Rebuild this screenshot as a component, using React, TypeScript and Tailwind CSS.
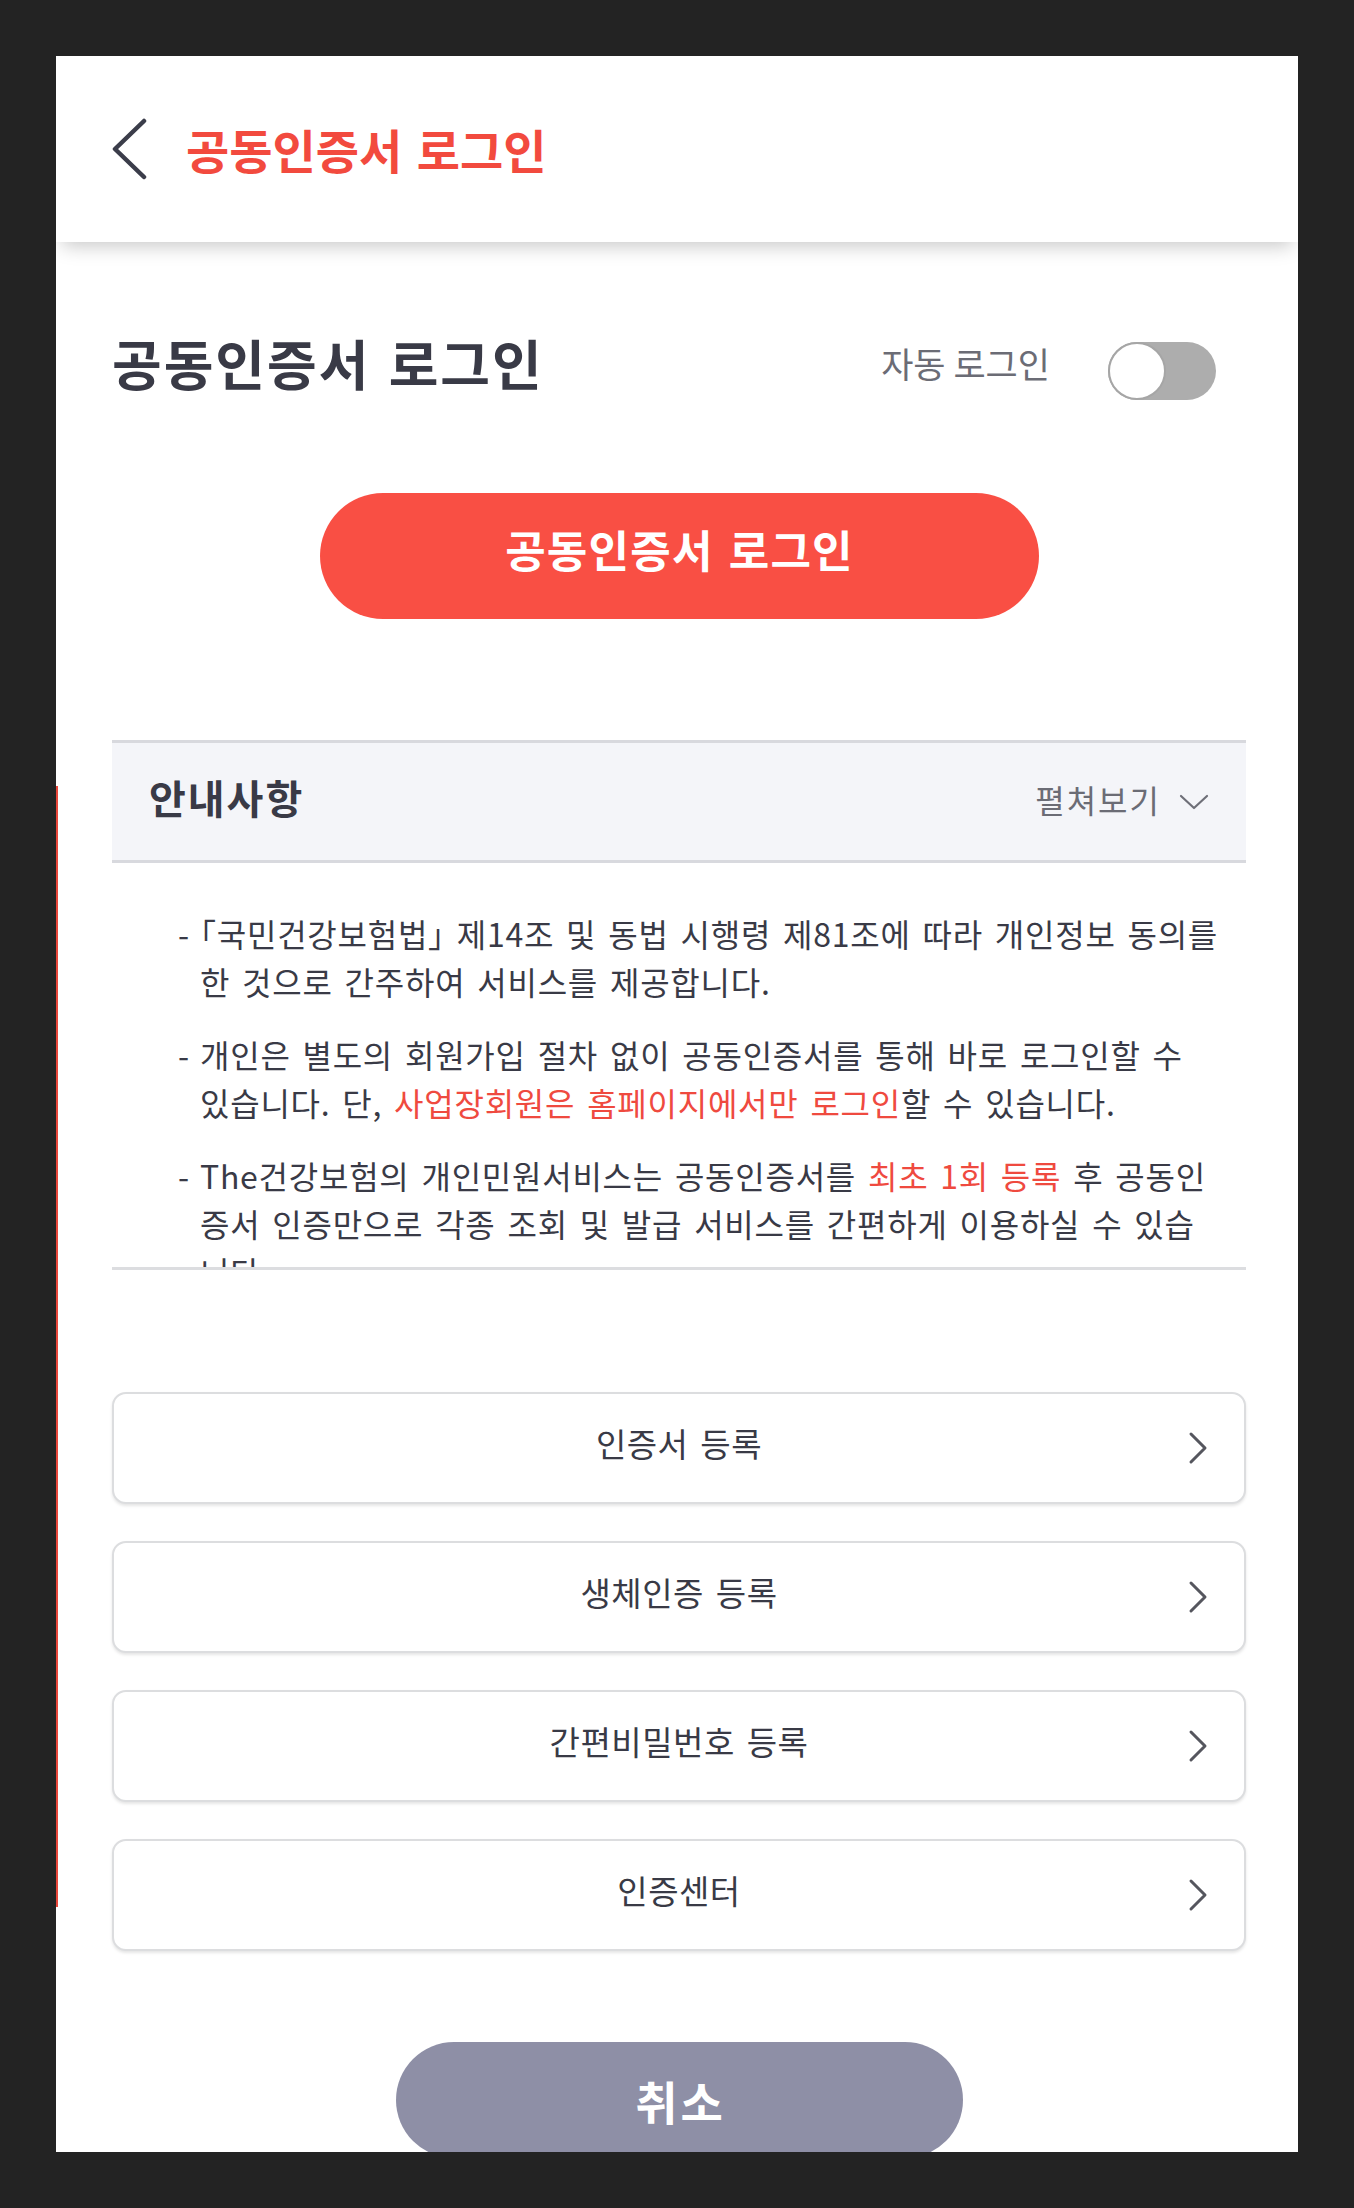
import { ReactNode } from "react";

const FONT = { fontFamily: '"Noto Sans CJK KR", "Noto Sans", sans-serif' };

const menuItems = ["인증서 등록", "생체인증 등록", "간편비밀번호 등록", "인증센터"];

function Red({ children }: { children: ReactNode }) {
  return <span className="text-[#ef4a3f]">{children}</span>;
}

// 괄호는 반각 폭으로 (원본 폰트에 맞춤)
function Half({ children }: { children: ReactNode }) {
  return <span className="[font-feature-settings:'halt']">{children}</span>;
}

// 안내사항 항목: 줄바꿈은 원본 화면 그대로 맞춤
const notices: ReactNode[][] = [
  [
    <>
      <Half>「</Half>국민건강보험법<Half>」</Half> 제14조 및 동법 시행령 제81조에 따라 개인정보 동의를
    </>,
    "한 것으로 간주하여 서비스를 제공합니다.",
  ],
  [
    "개인은 별도의 회원가입 절차 없이 공동인증서를 통해 바로 로그인할 수",
    <>
      있습니다. 단, <Red>사업장회원은 홈페이지에서만 로그인</Red>할 수 있습니다.
    </>,
  ],
  [
    <>
      The건강보험의 개인민원서비스는 공동인증서를 <Red>최초 1회 등록</Red> 후 공동인
    </>,
    "증서 인증만으로 각종 조회 및 발급 서비스를 간편하게 이용하실 수 있습",
    "니다.",
  ],
];

function ChevronRight() {
  return (
    <svg width="20" height="34" viewBox="0 0 20 34" fill="none">
      <polyline
        points="3,3 17,17 3,31"
        stroke="#55565e"
        strokeWidth="3"
        strokeLinecap="round"
        strokeLinejoin="round"
      />
    </svg>
  );
}

export default function App() {
  return (
    <div className="min-h-[2208px] bg-[#232323] px-[56px] pt-[56px]" style={FONT}>
      <div className="relative flex h-[2096px] w-[1242px] flex-col overflow-hidden bg-white">
        {/* 왼쪽 빨간 선 */}
        <div className="absolute left-0 top-[730px] h-[1121px] w-[2px] bg-[#e9473b]" />

        <header className="relative z-10 flex h-[186px] shrink-0 items-center bg-white pl-[56px] shadow-[0_10px_18px_-6px_rgba(0,0,0,0.22)]">
          <svg width="36" height="62" viewBox="0 0 36 62" fill="none">
            <polyline
              points="32,3 3,31 32,59"
              stroke="#3b3d4a"
              strokeWidth="4.5"
              strokeLinecap="round"
              strokeLinejoin="round"
            />
          </svg>
          <h1 className="ml-[38px] text-[47px] font-bold [word-spacing:4px] text-[#f24a3e]">
            공동인증서 로그인
          </h1>
        </header>

        <main className="flex flex-col pl-[56px] pr-[52px] pt-[100px]">
          <div className="flex h-[58px] items-center justify-between pr-[30px]">
            <h2 className="pb-[16px] text-[54px] font-bold leading-none tracking-[2px] [word-spacing:4px] text-[#393a46]">
              공동인증서 로그인
            </h2>
            <div className="flex items-center gap-[58px]">
              <span className="pb-[16px] text-[35px] text-[#6b6c75]">자동 로그인</span>
              <div className="flex h-[58px] w-[108px] items-center rounded-full bg-[#adadad]">
                <div className="h-[58px] w-[58px] rounded-full border-2 border-[#a6a6a6] bg-white" />
              </div>
            </div>
          </div>

          <button className="mx-auto mt-[93px] flex h-[126px] w-[719px] items-center justify-center rounded-full bg-[#f94f44] pb-[14px] pl-[1px] text-[44px] font-bold tracking-[1.2px] [word-spacing:4px] text-white">
            공동인증서 로그인
          </button>

          <section className="mt-[121px]">
            <div className="flex h-[123px] items-center justify-between border-y-[3px] border-[#d8d9de] bg-[#f4f5f9] px-[37px]">
              <span className="pb-[10px] text-[40px] font-bold tracking-[2px] text-[#393a46]">
                안내사항
              </span>
              <div className="flex items-center gap-[18px]">
                <span className="pb-[6px] text-[32px] tracking-[2px] text-[#6b6c75]">펼쳐보기</span>
                <svg width="30" height="16" viewBox="0 0 30 16" fill="none">
                  <polyline
                    points="2,2 15,14 28,2"
                    stroke="#6e6f78"
                    strokeWidth="2.2"
                    strokeLinecap="round"
                    strokeLinejoin="round"
                  />
                </svg>
              </div>
            </div>
            <div className="h-[407px] overflow-hidden border-b-[3px] border-[#dcdde0] pl-[66px] pt-[46px]">
              <div className="flex flex-col gap-[25px]">
                {notices.map((lines, i) => (
                  <div
                    key={i}
                    className="flex text-[32px] leading-[48px] tracking-[0.75px] [word-spacing:4px] text-[#393a46]"
                  >
                    <span className="w-[22px] shrink-0">-</span>
                    <div className="flex flex-col">
                      {lines.map((line, j) => (
                        <span key={j} className="whitespace-nowrap">
                          {line}
                        </span>
                      ))}
                    </div>
                  </div>
                ))}
              </div>
            </div>
          </section>

          <nav className="mt-[122px] flex flex-col gap-[37px]">
            {menuItems.map((item) => (
              <button
                key={item}
                className="relative flex h-[112px] items-center justify-center rounded-[14px] border-2 border-[#dcdddf] bg-white shadow-[0_2px_3px_rgba(0,0,0,0.1)]"
              >
                <span className="pb-[8px] text-[33px] tracking-[0.5px] [word-spacing:4px] text-[#393a46]">
                  {item}
                </span>
                <span className="absolute right-[36px] top-1/2 -translate-y-1/2">
                  <ChevronRight />
                </span>
              </button>
            ))}
          </nav>

          <button className="mx-auto mt-[91px] flex h-[116px] w-[567px] shrink-0 items-center justify-center rounded-full bg-[#8e8fa6] pl-[3px] text-[46px] font-bold tracking-[3px] text-white">
            취소
          </button>
        </main>
      </div>
    </div>
  );
}
